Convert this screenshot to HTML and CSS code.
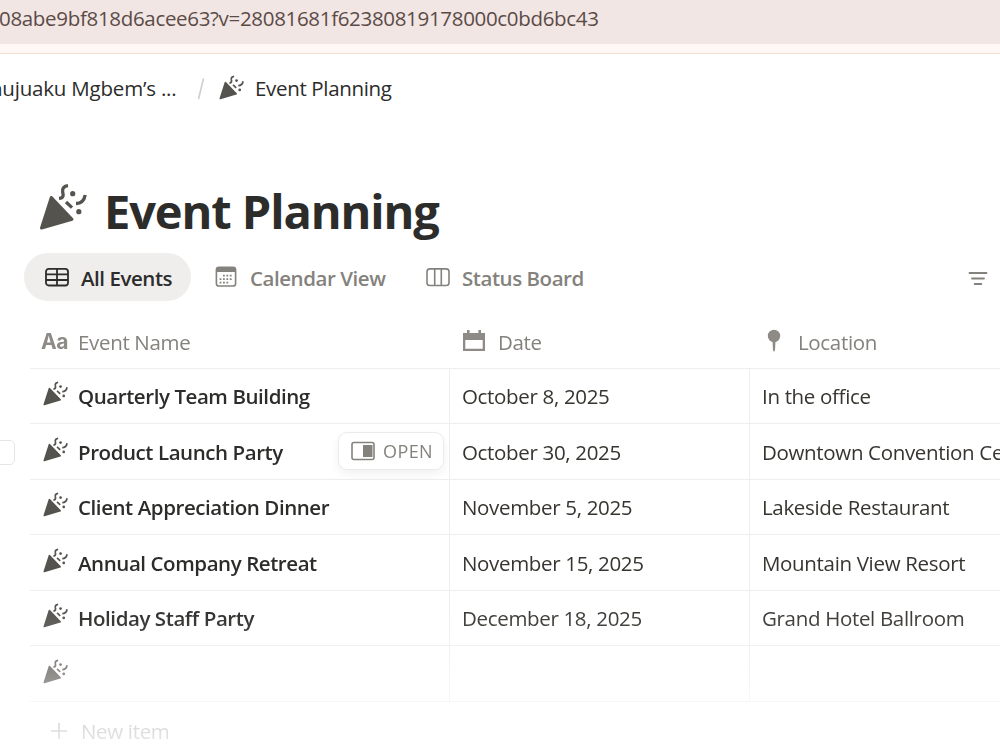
FILE: index.html
```
<!DOCTYPE html>
<html lang="en">
<head>
  <meta charset="UTF-8">
  <title>Event Planning</title>
  <link rel="stylesheet" href="styles.css">
</head>
<body>
  <svg class="sprite" aria-hidden="true">
    <symbol id="party" viewBox="0 0 48 48">
      <path d="M12.3 14.5L33 36.2L2.5 45Z" fill="currentColor" stroke="currentColor" stroke-width="3" stroke-linejoin="round"/>
      <path d="M20 15.4C24.6 15 24.5 12.3 23.7 9C23 5.5 25 3 29 2.6M37 20.5C42.3 20.5 45.3 17 46.2 12M27 19L33 24.6" fill="none" stroke="currentColor" stroke-width="3.3"/>
      <circle cx="33.7" cy="10.7" r="2.6" fill="currentColor"/>
      <circle cx="39.8" cy="28.7" r="2.6" fill="currentColor"/>
    </symbol>
  </svg>

  <div class="address-bar"><span class="url">08abe9bf818d6acee63?v=28081681f62380819178000c0bd6bc43</span></div>
  <div class="toolbar-edge"></div>

  <nav class="breadcrumb">
    <span class="workspace">nujuaku Mgbem’s ...</span>
    <svg class="slash" viewBox="0 0 8 24"><path d="M6.5 1.5L1.5 22" stroke="#cfcecb" stroke-width="1.6"/></svg>
    <svg class="crumb-icon"><use href="#party"/></svg>
    <span class="crumb">Event Planning</span>
  </nav>

  <header class="page-header">
    <svg class="title-icon"><use href="#party"/></svg>
    <h1>Event Planning</h1>
  </header>

  <div class="tabs">
    <div class="tab active">
      <svg class="tab-icon" viewBox="0 0 24 24" fill="none" stroke="currentColor" stroke-width="1.8">
        <rect x="1" y="3.9" width="22" height="16.6" rx="2.8"/>
        <path d="M1 9.4H23M1 15H23M12 4V20.5"/>
      </svg>
      <span>All Events</span>
    </div>
    <div class="tab">
      <svg class="tab-icon" viewBox="0 0 24 24">
        <rect x="2.4" y="2.4" width="19.2" height="18.6" rx="2.6" fill="none" stroke="currentColor" stroke-width="1.6"/>
        <path d="M2 7V4.5Q2 2 4.5 2H19.5Q22 2 22 4.5V7Z" fill="currentColor"/>
        <path d="M9 10.6H19M5.6 14.1H19M5.6 17.6H15" stroke="currentColor" stroke-width="1.8" stroke-dasharray="1.8 1.6"/>
      </svg>
      <span>Calendar View</span>
    </div>
    <div class="tab">
      <svg class="tab-icon" viewBox="0 0 24 24" fill="none" stroke="currentColor" stroke-width="1.6">
        <rect x="1" y="3.9" width="22" height="16.6" rx="2.8"/>
        <path d="M8.7 4V20.5M15.3 4V20.5"/>
      </svg>
      <span>Status Board</span>
    </div>
    <svg class="filter" viewBox="0 0 20 16" stroke="currentColor" stroke-width="1.8" stroke-linecap="round">
      <path d="M1.5 2H18.5M4 7.5H16M6.7 13H13.3"/>
    </svg>
  </div>

  <main class="table">
    <div class="row head">
      <div class="cell">
        <span class="aa">Aa</span>
        <span>Event Name</span>
      </div>
      <div class="cell">
        <svg class="head-icon" viewBox="0 0 24 24"><path d="M1 4H5V1H7.6V4H16.4V1H19V4H23V22H1ZM3.3 11V19.7H20.7V11Z" fill="currentColor" fill-rule="evenodd"/></svg>
        <span>Date</span>
      </div>
      <div class="cell">
        <svg class="head-icon" viewBox="0 0 24 24"><circle cx="12" cy="7" r="6.2" fill="currentColor"/><path d="M10.5 12H13.5L13 21Q12 24 11 21Z" fill="currentColor"/></svg>
        <span>Location</span>
      </div>
    </div>

    <div class="row">
      <div class="cell name"><svg class="row-icon"><use href="#party"/></svg><span>Quarterly Team Building</span></div>
      <div class="cell">October 8, 2025</div>
      <div class="cell">In the office</div>
    </div>
    <div class="row">
      <span class="row-check"></span>
      <div class="cell name">
        <svg class="row-icon"><use href="#party"/></svg><span>Product Launch Party</span>
        <button class="open">
          <svg viewBox="0 0 24 20"><rect x="1" y="1.5" width="22" height="17" rx="2" fill="none" stroke="currentColor" stroke-width="1.6"/><path d="M12 4H21.5V16H12Z" fill="currentColor"/></svg>
          <span>OPEN</span>
        </button>
      </div>
      <div class="cell">October 30, 2025</div>
      <div class="cell">Downtown Convention Center</div>
    </div>
    <div class="row">
      <div class="cell name"><svg class="row-icon"><use href="#party"/></svg><span>Client Appreciation Dinner</span></div>
      <div class="cell">November 5, 2025</div>
      <div class="cell">Lakeside Restaurant</div>
    </div>
    <div class="row">
      <div class="cell name"><svg class="row-icon"><use href="#party"/></svg><span>Annual Company Retreat</span></div>
      <div class="cell">November 15, 2025</div>
      <div class="cell">Mountain View Resort</div>
    </div>
    <div class="row">
      <div class="cell name"><svg class="row-icon"><use href="#party"/></svg><span>Holiday Staff Party</span></div>
      <div class="cell">December 18, 2025</div>
      <div class="cell">Grand Hotel Ballroom</div>
    </div>
    <div class="row">
      <div class="cell name"><svg class="row-icon"><use href="#party"/></svg></div>
      <div class="cell"></div>
      <div class="cell"></div>
    </div>
    <div class="new-item">
      <svg viewBox="0 0 16 16"><path d="M8 0V16M0 8H16" stroke="currentColor" stroke-width="1.6"/></svg>
      <span>New item</span>
    </div>
  </main>
</body>
</html>
```
FILE: styles.css
```
* {
  box-sizing: border-box;
}

body {
  margin: 0;
  width: 1000px;
  height: 750px;
  overflow: hidden;
  background: #fff;
  color: #373530;
  font-family: "Open Sans", "Noto Sans", sans-serif;
  font-size: 20.5px;
  line-height: 28px;
  letter-spacing: -0.33px;
  white-space: nowrap;
}

svg {
  display: block;
  flex: none;
}

.sprite {
  position: absolute;
  width: 0;
  height: 0;
}

.address-bar {
  height: 44px;
  padding-top: 4px;
  background: #f2e6e4;
  color: #5b4b47;
}

.url {
  margin-left: -1px;
  letter-spacing: -0.32px;
}

.toolbar-edge {
  height: 10px;
  background: #fff7f3;
  border-bottom: 1px solid #f3dcd2;
}

.breadcrumb {
  display: flex;
  align-items: center;
  height: 70px;
  color: #2c2c2b;
}

.workspace {
  width: 197px;
  margin: -2px 0 0 -10px;
  letter-spacing: -0.2px;
}

.slash {
  width: 8px;
  height: 24px;
  margin-left: 10px;
}

.crumb-icon {
  width: 25px;
  height: 25px;
  margin: -3px 0 0 14px;
  color: #55534e;
}

.crumb {
  margin: -2px 0 0 11px;
}

.page-header {
  display: flex;
  align-items: center;
  height: 60px;
  margin-top: 58px;
  padding-left: 39px;
}

.title-icon {
  width: 48px;
  height: 48px;
  margin-top: -10px;
  color: #55534e;
}

h1 {
  margin: -3px 0 0 17px;
  font-size: 47px;
  line-height: 60px;
  font-weight: 700;
  letter-spacing: -1.1px;
  color: #2c2c2b;
}

.tabs {
  display: flex;
  align-items: center;
  height: 48px;
  margin-top: 11px;
  padding-left: 24px;
  font-weight: 560;
  letter-spacing: -0.45px;
  color: #84827c;
}

.tab {
  display: flex;
  align-items: center;
  gap: 12px;
  width: 211px;
  height: 48px;
  padding-left: 24px;
}

.tab span {
  margin-top: 2px;
}

.tab.active {
  width: 167px;
  padding-left: 21px;
  border-radius: 24px;
  background: #efeeed;
  color: #2c2c2b;
}

.tab:nth-child(2) {
  padding-left: 23px;
}

.tab-icon {
  width: 24px;
  height: 24px;
}

.filter {
  width: 20px;
  height: 16px;
  margin: 4px 12px 0 auto;
}

.table {
  height: 434px;
  margin-top: 15px;
  padding-left: 30px;
  overflow: hidden;
  -webkit-mask-image: linear-gradient(#000 290px, rgba(0, 0, 0, .86) 325px, rgba(0, 0, 0, .68) 355px, rgba(0, 0, 0, .3) 415px, rgba(0, 0, 0, .2) 434px);
  mask-image: linear-gradient(#000 290px, rgba(0, 0, 0, .86) 325px, rgba(0, 0, 0, .68) 355px, rgba(0, 0, 0, .3) 415px, rgba(0, 0, 0, .2) 434px);
}

.row {
  position: relative;
  display: grid;
  grid-template-columns: 420px 300px 400px;
  height: 55.5px;
  border-bottom: 1px solid #eeeeed;
}

.cell {
  display: flex;
  align-items: center;
  padding: 1px 0 0 12px;
  border-right: 1px solid #eeeeed;
}

.head {
  height: 52.6px;
  color: #84827c;
}

.head .cell {
  border-right: 0;
  gap: 12px;
}

.head .cell:first-child {
  padding-left: 11px;
  gap: 0;
}

.aa {
  width: 37px;
  font-family: Inter, sans-serif;
  font-size: 21px;
  font-weight: 650;
  color: #8e8b86;
}

.head-icon {
  width: 24px;
  height: 24px;
  margin-top: -2px;
  color: #8e8b86;
}

.name {
  padding-left: 13px;
  font-weight: 560;
  letter-spacing: -0.43px;
  color: #2c2c2b;
}

.row-icon {
  width: 25px;
  height: 25px;
  margin: -5px 10px 0 0;
  color: #55534e;
}

/* checkbox sits in the gutter, left of the hovered row */
.row-check {
  position: absolute;
  left: -50px;
  top: 16px;
  width: 35px;
  height: 25px;
  border: 1.5px solid #e6e5e3;
  border-radius: 5px;
}

.open {
  display: flex;
  align-items: center;
  gap: 8px;
  width: 106px;
  height: 38px;
  margin: -1px 5px 0 auto;
  padding: 0 0 0 12px;
  border: 1px solid #ebebea;
  border-radius: 9px;
  background: #fff;
  box-shadow: 0 4px 10px rgba(0, 0, 0, .06);
  font: 530 18px "Open Sans", sans-serif;
  letter-spacing: .4px;
  color: #84827c;
}

.open svg {
  width: 24px;
  height: 20px;
}

.new-item {
  display: flex;
  align-items: center;
  gap: 14px;
  height: 58px;
  padding-left: 21px;
  color: #91918e;
}

.new-item svg {
  width: 16px;
  height: 16px;
}
```
